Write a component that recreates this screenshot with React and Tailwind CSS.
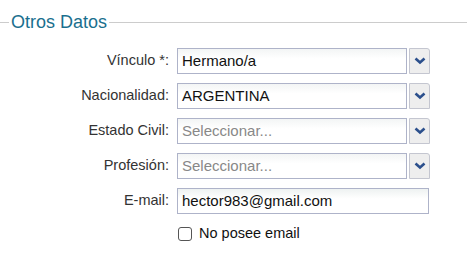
import React from "react";

const Chevron = () => (
  <svg width="12" height="8" viewBox="0 0 12 8">
    <path d="M1.5 1.5 L6 5.5 L10.5 1.5" fill="none" stroke="#2b4f8c" strokeWidth="2.6" strokeLinecap="butt" />
  </svg>
);

function SelectRow({ label, value, placeholder }) {
  return (
    <div className="flex items-center h-[26px]">
      <div className="w-[170px] pr-[1px] text-right text-[14.5px] text-[#333]">{label}</div>
      <div className="ml-[7px] flex h-full">
        <div className="w-[230px] h-full border border-[#aeb3c9] bg-gradient-to-b from-[#f3f5f5] to-white to-[40%] flex items-center pl-[4px]">
          <span className={value ? "text-[15px] text-[#111]" : "text-[15px] text-[#888]"}>{value || placeholder}</span>
        </div>
        <div className="ml-[2px] w-[21px] h-full border border-[#c4c6d0] bg-[#eeeeee] rounded-tr-[3px] flex items-center justify-center">
          <Chevron />
        </div>
      </div>
    </div>
  );
}

export default function App() {
  return (
    <div className="w-[467px] h-[267px] bg-white" style={{ fontFamily: '"Liberation Sans", Arial, sans-serif' }}>
      <div className="pt-[11px] flex items-center h-[33px]">
        <div className="w-[9px] h-px bg-[#cccccc]" />
        <div className="px-[2px] text-[18px] leading-[22px] text-[#1a6f8e]">Otros Datos</div>
        <div className="flex-1 h-px bg-[#cccccc]" />
      </div>
      <div className="mt-[15px] flex flex-col gap-[9px]">
        <SelectRow label="Vínculo *:" value="Hermano/a" />
        <SelectRow label="Nacionalidad:" value="ARGENTINA" />
        <SelectRow label="Estado Civil:" placeholder="Seleccionar..." />
        <SelectRow label="Profesión:" placeholder="Seleccionar..." />
        <div className="flex items-center h-[26px]">
          <div className="w-[170px] pr-[1px] text-right text-[14.5px] text-[#333]">E-mail:</div>
          <div className="ml-[7px] w-[252px] h-full border border-[#aeb3c9] bg-gradient-to-b from-[#eef2f1] to-white to-[40%] flex items-center pl-[4px]">
            <span className="text-[15px] text-[#111]">hector983@gmail.com</span>
          </div>
        </div>
        <div className="flex items-center ml-[178px]">
          <div className="w-[14px] h-[14px] border border-[#555] rounded-[3px] bg-white" />
          <span className="ml-[7px] text-[14.5px] text-[#111]">No posee email</span>
        </div>
      </div>
    </div>
  );
}
